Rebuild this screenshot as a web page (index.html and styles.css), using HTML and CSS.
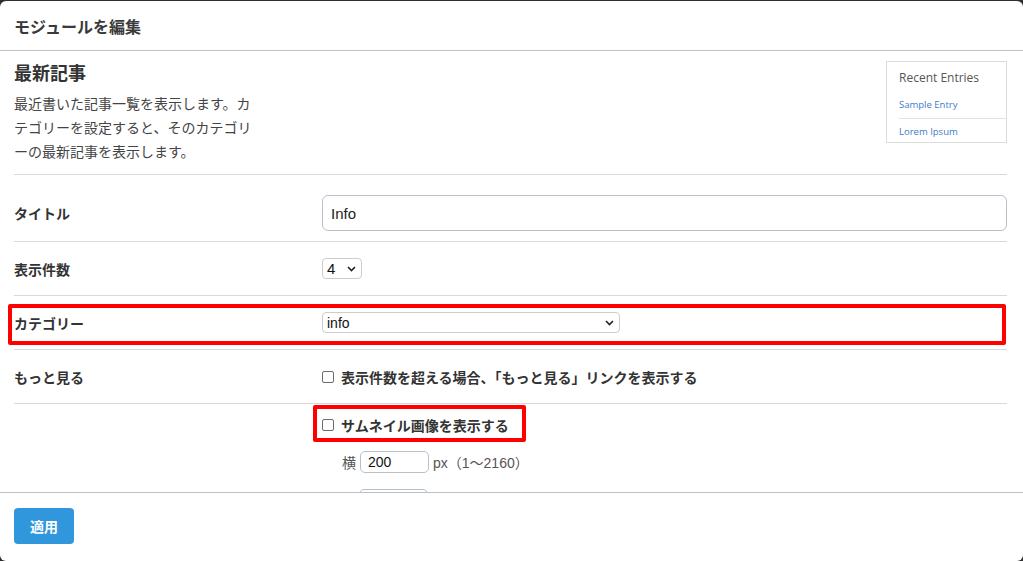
FILE: index.html
```html
<!DOCTYPE html>
<html lang="ja">
<head>
    <meta charset="UTF-8">
    <meta name="viewport" content="width=device-width, initial-scale=1.0">
    <title>モジュールを編集</title>
    <link rel="stylesheet" href="styles.css">
</head>
<body>
    <div class="modal">
        <div class="modal-header">
            <h2>モジュールを編集</h2>
        </div>

        <div class="modal-body">
            <div class="module-intro">
                <div class="intro-text">
                    <h3>最新記事</h3>
                    <p>最近書いた記事一覧を表示します。カテゴリーを設定すると、そのカテゴリーの最新記事を表示します。</p>
                </div>
                <div class="preview">
                    <div class="preview-title">Recent Entries</div>
                    <a class="preview-link">Sample Entry</a>
                    <a class="preview-link">Lorem Ipsum</a>
                </div>
            </div>

            <div class="field-row field-row-title">
                <div class="field-label">タイトル</div>
                <div class="field-control">
                    <input class="text-input" type="text" value="Info">
                </div>
            </div>

            <div class="field-row">
                <div class="field-label">表示件数</div>
                <div class="field-control">
                    <span class="select-wrap select-small">
                        <select>
                            <option>4</option>
                        </select>
                        <svg class="chevron" width="9" height="6" viewBox="0 0 9 6"><path d="M1 1l3.5 3.5L8 1" fill="none" stroke="#222" stroke-width="1.6"/></svg>
                    </span>
                </div>
            </div>

            <div class="field-row highlight">
                <div class="field-label">カテゴリー</div>
                <div class="field-control">
                    <span class="select-wrap select-wide">
                        <select>
                            <option>info</option>
                        </select>
                        <svg class="chevron" width="9" height="6" viewBox="0 0 9 6"><path d="M1 1l3.5 3.5L8 1" fill="none" stroke="#222" stroke-width="1.6"/></svg>
                    </span>
                </div>
            </div>

            <div class="field-row">
                <div class="field-label">もっと見る</div>
                <div class="field-control">
                    <label class="check"><input type="checkbox"> 表示件数を超える場合、「もっと見る」リンクを表示する</label>
                </div>
            </div>

            <div class="field-row field-row-thumb">
                <div class="field-label"></div>
                <div class="field-control">
                    <label class="check check-marked"><input type="checkbox"> サムネイル画像を表示する</label>
                    <div class="size-line">
                        <span class="size-name">横</span>
                        <input class="size-input" type="text" value="200">
                        <span>px（1〜2160）</span>
                    </div>
                    <div class="size-line size-line-next">
                        <input class="size-input" type="text">
                    </div>
                </div>
            </div>
        </div>

        <div class="modal-footer">
            <button class="btn-apply">適用</button>
        </div>
    </div>
</body>
</html>
```

FILE: styles.css
```css
body {
    margin: 0;
    padding: 0;
    background-color: #2e2e30;
    font-family: 'Liberation Sans', 'Noto Sans CJK JP', sans-serif;
    color: #333;
}

.modal {
    margin-top: 1px;
    height: 560px;
    background-color: #fff;
    border-radius: 6px;
    display: flex;
    flex-direction: column;
    overflow: hidden;
}

.modal-header {
    height: 49px;
    border-bottom: 1px solid #b9c2ca;
    padding: 0 14px;
    display: flex;
    align-items: center;
}

.modal-header h2 {
    margin: 0;
    font-size: 16px;
    font-weight: bold;
    color: #3a3a3a;
}

.modal-body {
    flex: 1;
    overflow: hidden;
    padding: 0 16px 0 14px;
}

.module-intro {
    display: flex;
    justify-content: space-between;
    padding: 11px 0 10px;
    border-bottom: 1px solid #d6d9dd;
}

.intro-text h3 {
    margin: 0;
    font-size: 18px;
    line-height: 24px;
    font-weight: bold;
    color: #333;
}

.intro-text p {
    margin: 6px 0 0;
    width: 245px;
    font-size: 14px;
    line-height: 24px;
    color: #444;
}

.preview {
    margin-top: -1px;
    width: 107px;
    height: 80px;
    border: 1px solid #dcdcdc;
    padding: 0 0 0 12px;
}

.preview-title {
    font-size: 12px;
    color: #555;
    padding-top: 7px;
    height: 23px;
    font-family: 'Open Sans', sans-serif;
}

.preview-link {
    display: block;
    font-size: 9.5px;
    color: #3d7cc7;
    line-height: 26px;
    font-family: 'Open Sans', sans-serif;
}

.preview-link + .preview-link {
    border-top: 1px solid #e2e2e2;
}

.field-row {
    position: relative;
    display: grid;
    grid-template-columns: 308px 1fr;
    align-items: center;
    padding: 16px 0;
    border-bottom: 1px solid #d6d9dd;
}

.field-row-title {
    padding: 20px 0 10px;
}

.field-row-thumb {
    align-items: start;
    padding: 10px 0 0;
    border-bottom: none;
}

.highlight::after {
    content: '';
    position: absolute;
    left: -6px;
    right: 1px;
    top: 8px;
    bottom: 4px;
    border: 4px solid #f00;
    border-radius: 2px;
}

.field-label {
    font-size: 14px;
    font-weight: bold;
    color: #333;
}

.text-input {
    box-sizing: border-box;
    width: 100%;
    height: 36px;
    border: 1px solid #b7c0c9;
    border-radius: 6px;
    padding: 0 8px;
    font-family: inherit;
    font-size: 15px;
    color: #222;
}

.select-wrap {
    position: relative;
    display: inline-block;
    vertical-align: middle;
}

.select-wrap select {
    appearance: none;
    -webkit-appearance: none;
    box-sizing: border-box;
    height: 21px;
    border: 1px solid #c9ced3;
    border-radius: 4px;
    background-color: #fff;
    padding: 0 0 0 4px;
    font-family: inherit;
    color: #111;
}

.select-small select {
    width: 40px;
    font-size: 15px;
}

.select-wide select {
    width: 298px;
    font-size: 14px;
}

.chevron {
    position: absolute;
    right: 6px;
    top: 8px;
}

.check {
    position: relative;
    display: inline-flex;
    align-items: center;
    height: 21px;
    font-size: 14px;
    font-weight: bold;
    color: #333;
}

.check input {
    appearance: none;
    -webkit-appearance: none;
    width: 12px;
    height: 12px;
    margin: 0 7px 0 0;
    border: 1px solid #6c6c6c;
    border-radius: 2px;
    background: #fff;
}

.check-marked::after {
    content: '';
    position: absolute;
    left: -9px;
    right: -17px;
    top: -9px;
    bottom: -7px;
    border: 4px solid #f00;
    border-radius: 2px;
}

.size-line {
    display: flex;
    align-items: center;
    gap: 4px;
    margin: 16px 0 0 20px;
    font-size: 14px;
    color: #555;
}

.size-line-next {
    margin-left: 37px;
}

.size-name {
    color: #555;
}

.size-input {
    box-sizing: border-box;
    width: 69px;
    height: 22px;
    border: 1px solid #b7c0c9;
    border-radius: 5px;
    padding: 0 7px;
    font-family: inherit;
    font-size: 14px;
    color: #111;
}

.modal-footer {
    height: 69px;
    border-top: 1px solid #b9c2ca;
    padding: 15px 14px 0;
    box-sizing: border-box;
}

.btn-apply {
    width: 60px;
    height: 36px;
    border: none;
    border-radius: 4px;
    background-color: #3097dd;
    color: #fff;
    font-family: inherit;
    font-size: 14px;
    font-weight: bold;
}
```
